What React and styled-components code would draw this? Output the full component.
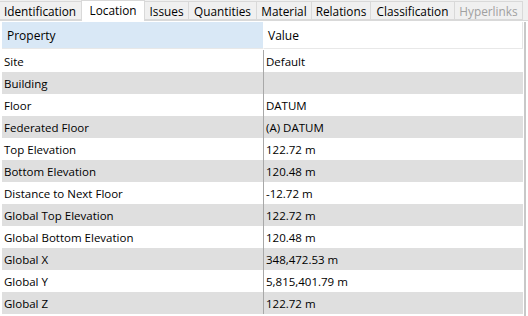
import React from "react";
import styled, { createGlobalStyle } from "styled-components";

const Global = createGlobalStyle`
  html, body { margin: 0; padding: 0; background: #ffffff; }
  body { width: 528px; height: 316px; overflow: hidden; font-family: "Open Sans", "Noto Sans", sans-serif; font-size: 11.5px; color: #000; }
`;

const Frame = styled.div`
  display: flex;
  flex-direction: column;
  width: 528px;
  height: 316px;
  background: #f0f0f0;
`;

const TabBar = styled.div`
  display: flex;
  align-items: flex-end;
  height: 21px;
  background: #f0f0f0;
  border-bottom: 1px solid #d9d9d9;
  box-sizing: border-box;
`;

const Tab = styled.div`
  box-sizing: border-box;
  width: ${(p) => p.$w}px;
  height: ${(p) => (p.$active ? 21 : 19)}px;
  margin-bottom: ${(p) => (p.$active ? -1 : 0)}px;
  display: flex;
  align-items: center;
  justify-content: center;
  padding-bottom: ${(p) => (p.$active ? 3 : 0)}px;
  background: ${(p) => (p.$active ? "#ffffff" : "#f0f0f0")};
  border: 1px solid #d9d9d9;
  border-bottom: ${(p) => (p.$active ? "none" : "1px solid #d9d9d9")};
  border-left: ${(p) => (p.$first ? "none" : "1px solid #d9d9d9")};
  margin-left: -1px;
  color: ${(p) => (p.$disabled ? "#a0a0a0" : "#000")};
  font-size: 11.8px;
  white-space: nowrap;
  position: relative;
  z-index: ${(p) => (p.$active ? 1 : 0)};
`;

const Panel = styled.div`
  flex: 1;
  background: #ffffff;
  padding: 1px 0 0 2px;
  display: flex;
`;

const Grid = styled.div`
  display: grid;
  grid-template-columns: 261px 260px;
  grid-template-rows: 28px;
  grid-auto-rows: 22px;
  width: 522px;
  border-right: 2px solid #c8c8c8;
  align-content: start;
`;

const HeadCell = styled.div`
  height: 27px;
  display: flex;
  align-items: center;
  padding-left: ${(p) => (p.$first ? 5 : 4)}px;
  padding-top: 1px;
  box-sizing: border-box;
  background: ${(p) => (p.$first ? "#d9e8f6" : "#ffffff")};
  border-bottom: 1px solid #e8e8e8;
  border-right: ${(p) => (p.$first ? "none" : "1px solid #e6e6e6")};
  border-left: ${(p) => (p.$first ? "none" : "1px solid #ffffff")};
  font-size: 12px;
`;

const Cell = styled.div`
  display: flex;
  align-items: center;
  padding-left: 2px;
  background: ${(p) => (p.$alt ? "#dfdfdf" : "#ffffff")};
  border-left: ${(p) => (p.$first ? "none" : "1px solid #a8a8a8")};
  white-space: nowrap;
`;

const tabs = [
  { label: "Identification", w: 83 },
  { label: "Location", w: 64, active: true },
  { label: "Issues", w: 45 },
  { label: "Quantities", w: 69 },
  { label: "Material", w: 56 },
  { label: "Relations", w: 60 },
  { label: "Classification", w: 85 },
  { label: "Hyperlinks", w: 69, disabled: true },
];

const rows = [
  ["Site", "Default"],
  ["Building", ""],
  ["Floor", "DATUM"],
  ["Federated Floor", "(A) DATUM"],
  ["Top Elevation", "122.72 m"],
  ["Bottom Elevation", "120.48 m"],
  ["Distance to Next Floor", "-12.72 m"],
  ["Global Top Elevation", "122.72 m"],
  ["Global Bottom Elevation", "120.48 m"],
  ["Global X", "348,472.53 m"],
  ["Global Y", "5,815,401.79 m"],
  ["Global Z", "122.72 m"],
];

export default function App() {
  return (
    <Frame>
      <Global />
      <TabBar>
        {tabs.map((t, i) => (
          <Tab key={t.label} $w={t.w} $active={t.active} $disabled={t.disabled} $first={i === 0}>
            {t.label}
          </Tab>
        ))}
      </TabBar>
      <Panel>
        <Grid>
          <HeadCell $first>Property</HeadCell>
          <HeadCell>Value</HeadCell>
          {rows.map((r, i) => (
            <React.Fragment key={r[0]}>
              <Cell $first $alt={i % 2 === 1}>{r[0]}</Cell>
              <Cell $alt={i % 2 === 1}>{r[1]}</Cell>
            </React.Fragment>
          ))}
        </Grid>
      </Panel>
    </Frame>
  );
}
